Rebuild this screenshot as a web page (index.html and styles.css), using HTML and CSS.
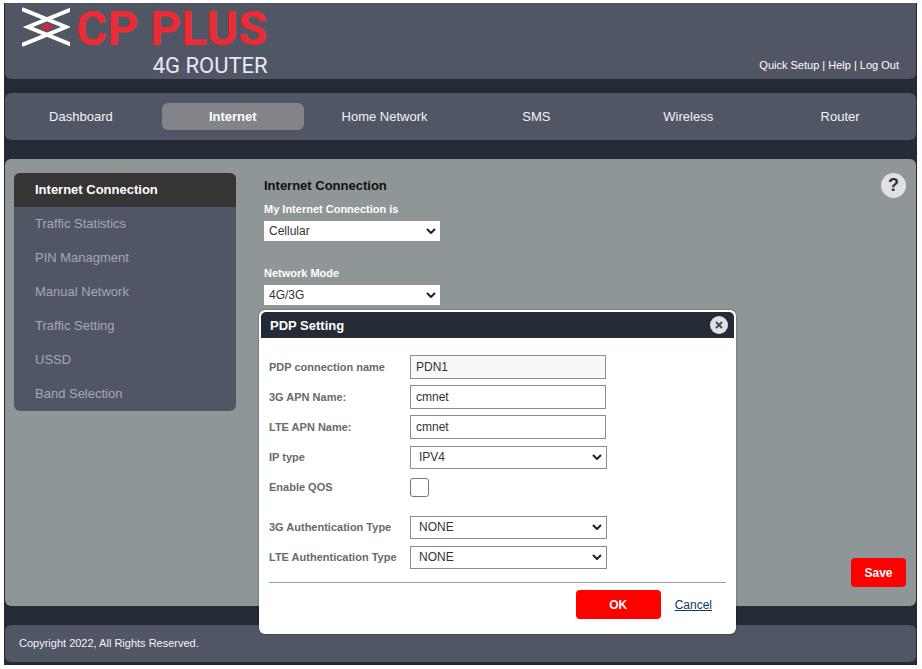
FILE: index.html
```html
<!DOCTYPE html>
<html lang="en">
<head>
    <meta charset="UTF-8">
    <meta name="viewport" content="width=device-width, initial-scale=1.0">
    <title>4G Router</title>
    <link rel="stylesheet" href="styles.css">
</head>
<body>
    <div class="page">
        <header class="header">
            <div class="logo">
                <svg class="logo-mark" viewBox="0 0 48 40" aria-hidden="true">
                    <path d="M0 2L44 20L0 38M50 2L6 20L50 38" fill="none" stroke="#fff" stroke-width="4"/>
                    <path d="M25 16L32 20L25 24L18 20Z" fill="#cf2742"/>
                </svg>
                <div class="logo-text">
                    <span class="brand">CP PLUS</span>
                    <span class="model">4G ROUTER</span>
                </div>
            </div>
            <div class="top-links">
                <a href="#">Quick Setup</a> | <a href="#">Help</a> | <a href="#">Log Out</a>
            </div>
        </header>

        <nav class="main-nav">
            <a href="#">Dashboard</a>
            <a href="#" class="active">Internet</a>
            <a href="#">Home Network</a>
            <a href="#">SMS</a>
            <a href="#">Wireless</a>
            <a href="#">Router</a>
        </nav>

        <main class="content">
            <nav class="side-menu">
                <a href="#" class="active">Internet Connection</a>
                <a href="#">Traffic Statistics</a>
                <a href="#">PIN Managment</a>
                <a href="#">Manual Network</a>
                <a href="#">Traffic Setting</a>
                <a href="#">USSD</a>
                <a href="#">Band Selection</a>
            </nav>
            <form class="settings">
                <h1>Internet Connection</h1>
                <label for="connection">My Internet Connection is</label>
                <select id="connection">
                    <option>Cellular</option>
                </select>
                <label for="mode">Network Mode</label>
                <select id="mode">
                    <option>4G/3G</option>
                </select>
            </form>
            <div class="actions">
                <button type="button" class="help-btn" aria-label="Help">?</button>
                <button type="button" class="btn save-btn">Save</button>
            </div>
        </main>

        <footer class="footer">Copyright 2022, All Rights Reserved.</footer>

        <div class="modal" role="dialog" aria-labelledby="modalTitle">
            <div class="modal-header">
                <h2 id="modalTitle">PDP Setting</h2>
                <button type="button" class="close-btn" aria-label="Close">
                    <svg viewBox="0 0 18 18">
                        <circle cx="9" cy="9" r="9" fill="#dfe1e4"/>
                        <path d="M6 6L12 12M12 6L6 12" stroke="#4b4e55" stroke-width="2"/>
                    </svg>
                </button>
            </div>
            <form class="modal-body">
                <div class="field">
                    <label for="pdpName">PDP connection name</label>
                    <input type="text" id="pdpName" value="PDN1" readonly>
                </div>
                <div class="field">
                    <label for="apn3g">3G APN Name:</label>
                    <input type="text" id="apn3g" value="cmnet">
                </div>
                <div class="field">
                    <label for="apnLte">LTE APN Name:</label>
                    <input type="text" id="apnLte" value="cmnet">
                </div>
                <div class="field">
                    <label for="ipType">IP type</label>
                    <select id="ipType">
                        <option>IPV4</option>
                    </select>
                </div>
                <div class="field qos">
                    <label for="qos">Enable QOS</label>
                    <input type="checkbox" id="qos">
                </div>
                <div class="field">
                    <label for="auth3g">3G Authentication Type</label>
                    <select id="auth3g">
                        <option>NONE</option>
                    </select>
                </div>
                <div class="field">
                    <label for="authLte">LTE Authentication Type</label>
                    <select id="authLte">
                        <option>NONE</option>
                    </select>
                </div>
                <div class="modal-footer">
                    <button type="button" class="btn ok-btn">OK</button>
                    <a href="#">Cancel</a>
                </div>
            </form>
        </div>
    </div>
</body>
</html>
```
FILE: styles.css
```css
* {
    box-sizing: border-box;
}
body {
    font-family: "Liberation Sans", Arial, sans-serif;
    font-size: 12px;
    margin: 3px 5px 4px 4px;
    background-color: #fff;
}
h1, h2 {
    margin: 0;
}
a {
    color: inherit;
    text-decoration: none;
}
.page {
    position: relative;
    padding: 0 1px 3px;
    background-color: #252b36;
}
.header {
    display: flex;
    justify-content: space-between;
    align-items: flex-end;
    height: 76px;
    padding: 0 17px;
    background-color: #505663;
    border-radius: 0 0 6px 6px;
    color: #fff;
}
.logo {
    display: flex;
    align-self: flex-start;
    gap: 6px;
}
.logo-mark {
    width: 48px;
    height: 40px;
    margin-top: 4px;
}
.logo-text {
    display: flex;
    flex-direction: column;
    align-items: flex-end;
    font-family: Roboto, sans-serif;
}
.brand {
    font-size: 48px;
    font-weight: 700;
    line-height: 52px;
    color: #ee2b33;
}
.model {
    font-size: 22px;
    line-height: 22px;
    color: #e6e9f5;
}
.top-links {
    padding-bottom: 8px;
    font-size: 11px;
}
.main-nav {
    display: grid;
    grid-template-columns: repeat(6, 1fr);
    margin-top: 14px;
    padding: 10px 0;
    background-color: #505663;
    border-radius: 6px;
}
.main-nav a {
    margin: 0 5px;
    border-radius: 6px;
    font-size: 13px;
    line-height: 27px;
    text-align: center;
    color: #f2f3f5;
}
.main-nav .active {
    background-color: #838489;
    font-weight: bold;
    color: #fff;
}
.content {
    display: flex;
    min-height: 447px;
    margin-top: 19px;
    padding: 14px 9px;
    background-color: #8e9698;
    border-radius: 6px;
}
.side-menu {
    align-self: flex-start;
    width: 222px;
    overflow: hidden;
    background-color: #505663;
    border-radius: 6px;
}
.side-menu a {
    display: block;
    padding-left: 21px;
    font-size: 13px;
    line-height: 34px;
    color: #a3a9b7;
}
.side-menu .active {
    background-color: #363435;
    font-weight: bold;
    color: #fff;
}
.settings {
    display: flex;
    flex-direction: column;
    flex: 1;
    align-items: flex-start;
    padding: 4px 28px;
}
.settings h1 {
    font-size: 13px;
    line-height: 18px;
    color: #111;
}
.settings label {
    margin-top: 5px;
    font-size: 11px;
    font-weight: bold;
    line-height: 18px;
    color: #fff;
}
select {
    appearance: none;
    width: 176px;
    padding: 0 5px;
    border: 0;
    border-radius: 0;
    font: inherit;
    color: #333;
    background: #fff url("data:image/svg+xml,%3Csvg xmlns='http://www.w3.org/2000/svg' viewBox='0 0 10 6'%3E%3Cpath d='M1 1l4 4 4-4' fill='none' stroke='%23222' stroke-width='2'/%3E%3C/svg%3E") no-repeat right 4px center / 10px 6px;
}
.settings select {
    height: 20px;
    margin-top: 3px;
}
.settings select + label {
    margin-top: 23px;
}
.actions {
    display: flex;
    flex-direction: column;
    justify-content: space-between;
    align-items: flex-end;
    padding: 0 1px 5px;
}
.help-btn {
    width: 25px;
    height: 25px;
    padding: 0;
    border: none;
    border-radius: 50%;
    background-color: #e0e1e4;
    font-family: inherit;
    font-size: 18px;
    font-weight: bold;
    color: #333;
}
.btn {
    height: 29px;
    padding: 0;
    border: none;
    border-radius: 4px;
    background-color: #fe0000;
    font-family: inherit;
    font-size: 12px;
    font-weight: bold;
    color: #fff;
    cursor: pointer;
}
.save-btn {
    width: 55px;
}
.footer {
    margin-top: 19px;
    padding: 0 14px;
    background-color: #505663;
    border-radius: 6px;
    font-size: 11px;
    line-height: 37px;
    color: #f4f5f7;
}
/* PDP dialog, opens over the page */
.modal {
    position: absolute;
    top: 307px;
    left: 255px;
    width: 477px;
    padding: 2px;
    background-color: #fff;
    border-radius: 6px;
    box-shadow: 0 0 2px rgba(0, 0, 0, 0.5);
}
.modal-header {
    display: flex;
    justify-content: space-between;
    align-items: center;
    height: 26px;
    padding: 0 6px 0 9px;
    background-color: #252b36;
    border-radius: 5px 5px 0 0;
}
.modal-header h2 {
    font-size: 13px;
    color: #fff;
}
.close-btn {
    width: 18px;
    height: 18px;
    padding: 0;
    border: none;
    background: none;
}
.close-btn svg {
    display: block;
}
.modal-body {
    padding: 14px 8px 13px;
}
.field {
    display: grid;
    grid-template-columns: 141px 197px;
    align-items: center;
    height: 30px;
    color: #333;
}
.field label {
    font-size: 11px;
    font-weight: bold;
    color: #6a6a6a;
}
.field input[type="text"] {
    width: 196px;
    height: 24px;
    padding: 0 5px;
    border: 1px solid #8c8c8c;
    font: inherit;
    color: inherit;
}
.field input[readonly] {
    background-color: #f8f8f8;
}
.field select {
    width: 197px;
    height: 23px;
    padding: 0 8px;
    border: 1px solid #8c8c8c;
}
.field input[type="checkbox"] {
    appearance: none;
    width: 19px;
    height: 19px;
    margin: 0;
    border: 1px solid #777;
    border-radius: 3px;
    background-color: #fff;
}
.qos {
    margin-bottom: 10px;
}
.modal-footer {
    display: flex;
    justify-content: flex-end;
    align-items: center;
    gap: 14px;
    margin-top: 10px;
    padding: 7px 14px 0;
    border-top: 1px solid #a0a0a0;
}
.ok-btn {
    width: 85px;
}
.modal-footer a {
    color: #12395c;
    text-decoration: underline;
}
```
